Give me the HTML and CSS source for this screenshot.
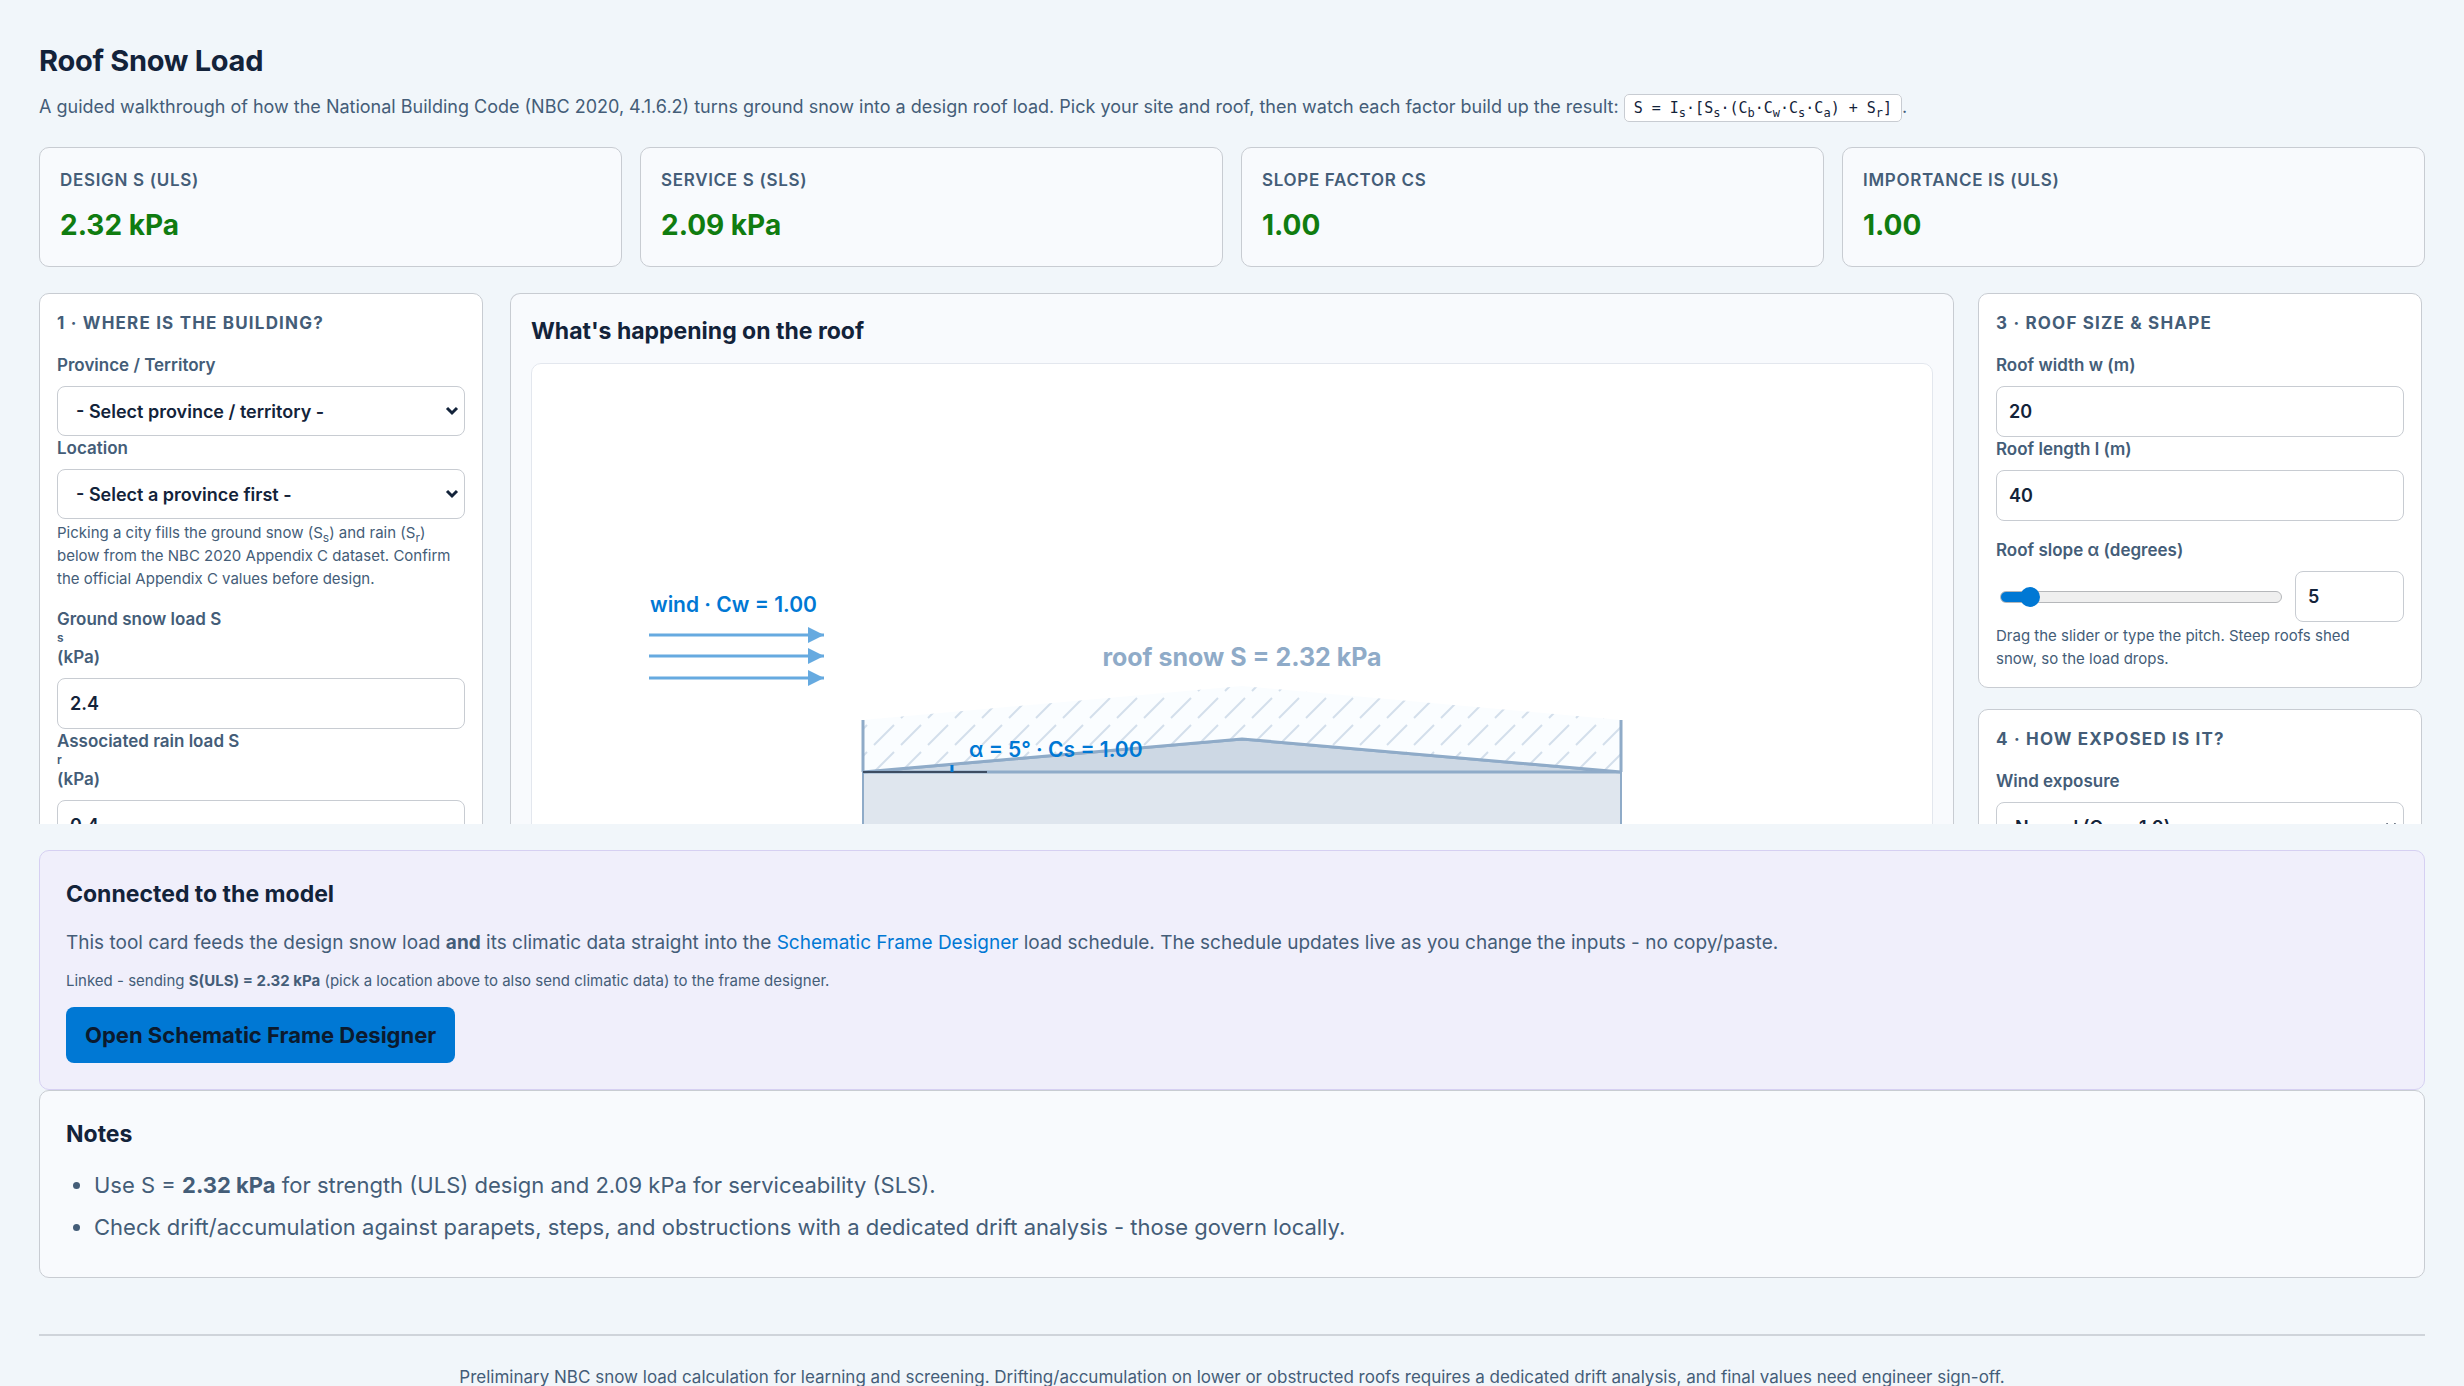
FILE: index.html
```html
<!DOCTYPE html>
<html lang="en">
<head>
    <meta charset="UTF-8">
    <title>Roof Snow Load</title>
    <link rel="stylesheet" href="styles.css">
</head>
<body>
    <div class="page">
        <header class="page-header">
            <h1>Roof Snow Load</h1>
            <p>A guided walkthrough of how the National Building Code (NBC 2020, 4.1.6.2) turns ground snow into a design roof load. Pick your site and roof, then watch each factor build up the result: <code>S = I<sub>s</sub>·[S<sub>s</sub>·(C<sub>b</sub>·C<sub>w</sub>·C<sub>s</sub>·C<sub>a</sub>) + S<sub>r</sub>]</code>.</p>
        </header>

        <section class="stats">
            <div class="stat">
                <span class="stat-label">Design S (ULS)</span>
                <span class="stat-value">2.32 kPa</span>
            </div>
            <div class="stat">
                <span class="stat-label">Service S (SLS)</span>
                <span class="stat-value">2.09 kPa</span>
            </div>
            <div class="stat">
                <span class="stat-label">Slope factor Cs</span>
                <span class="stat-value">1.00</span>
            </div>
            <div class="stat">
                <span class="stat-label">Importance Is (ULS)</span>
                <span class="stat-value">1.00</span>
            </div>
        </section>

        <main class="workspace">
            <div class="column">
                <section class="panel">
                    <h3>1 · Where is the building?</h3>
                    <div class="field">
                        <label for="province">Province / Territory</label>
                        <select id="province">
                            <option>- Select province / territory -</option>
                        </select>
                    </div>
                    <div class="field">
                        <label for="location">Location</label>
                        <select id="location">
                            <option>- Select a province first -</option>
                        </select>
                    </div>
                    <p class="hint">Picking a city fills the ground snow (S<sub>s</sub>) and rain (S<sub>r</sub>) below from the NBC 2020 Appendix C dataset. Confirm the official Appendix C values before design.</p>
                    <div class="field field-spaced">
                        <label for="groundSnow">Ground snow load S <sub>s</sub> (kPa)</label>
                        <input type="number" id="groundSnow" value="2.4" step="0.1">
                    </div>
                    <div class="field">
                        <label for="rainLoad">Associated rain load S <sub>r</sub> (kPa)</label>
                        <input type="number" id="rainLoad" value="0.4" step="0.1">
                    </div>
                </section>
            </div>

            <section class="stage">
                <h2>What's happening on the roof</h2>
                <div class="stage-canvas">
                    <svg class="diagram" viewBox="0 0 1400 640" role="img" aria-label="Roof section with snow and wind">
                        <defs>
                            <pattern id="snow" x="552" y="332" width="27" height="27" patternUnits="userSpaceOnUse">
                                <rect width="27" height="27" class="snow-fill"/>
                                <path d="M6 22L26 2" class="snow-hatch"/>
                            </pattern>
                            <marker id="arrow" viewBox="0 0 16 16" refX="16" refY="8" markerWidth="16" markerHeight="16" markerUnits="userSpaceOnUse">
                                <path d="M0 0L16 8L0 16Z" class="wind-head"/>
                            </marker>
                        </defs>

                        <!-- wind -->
                        <text x="118" y="248" class="label">wind · Cw = 1.00</text>
                        <g class="wind">
                            <path d="M117 271H292" marker-end="url(#arrow)"/>
                            <path d="M117 292H292" marker-end="url(#arrow)"/>
                            <path d="M117 314H292" marker-end="url(#arrow)"/>
                        </g>

                        <!-- building -->
                        <rect x="331" y="408" width="758" height="200" class="wall"/>
                        <path d="M331 408L710 375L1089 408Z" class="roof"/>

                        <!-- snow layer -->
                        <path d="M331 408V356L710 322L1089 356V408L710 375Z" fill="url(#snow)"/>
                        <path d="M331 408L710 375L1089 408" class="edge"/>
                        <path d="M331 356V408M1089 356V408" class="edge"/>
                        <text x="710" y="302" class="snow-label">roof snow S = 2.32 kPa</text>

                        <!-- slope -->
                        <path d="M331 408H455" class="slope-base"/>
                        <path d="M420 408V401" class="slope-arc"/>
                        <text x="437" y="393" class="label">α = 5° · Cs = 1.00</text>
                    </svg>
                </div>
            </section>

            <div class="column">
                <section class="panel">
                    <h3>3 · Roof size &amp; shape</h3>
                    <div class="field">
                        <label for="roofWidth">Roof width w (m)</label>
                        <input type="number" id="roofWidth" value="20">
                    </div>
                    <div class="field">
                        <label for="roofLength">Roof length l (m)</label>
                        <input type="number" id="roofLength" value="40">
                    </div>
                    <div class="field field-spaced">
                        <label for="slope">Roof slope α (degrees)</label>
                        <div class="slider-row">
                            <input type="range" id="slopeRange" min="0" max="70" value="5" aria-label="Roof slope slider" style="--fill: 10%">
                            <input type="number" id="slope" value="5">
                        </div>
                    </div>
                    <p class="hint">Drag the slider or type the pitch. Steep roofs shed snow, so the load drops.</p>
                </section>
                <section class="panel">
                    <h3>4 · How exposed is it?</h3>
                    <div class="field">
                        <label for="exposure">Wind exposure</label>
                        <select id="exposure">
                            <option>Normal (Cw = 1.0)</option>
                        </select>
                    </div>
                </section>
            </div>
        </main>

        <section class="card card-linked">
            <h2>Connected to the model</h2>
            <p>This tool card feeds the design snow load <strong>and</strong> its climatic data straight into the <a href="#frame-designer">Schematic Frame Designer</a> load schedule. The schedule updates live as you change the inputs - no copy/paste.</p>
            <p class="link-status">Linked - sending <strong>S(ULS) = 2.32 kPa</strong> (pick a location above to also send climatic data) to the frame designer.</p>
            <button type="button" class="btn">Open Schematic Frame Designer</button>
        </section>

        <section class="card">
            <h2>Notes</h2>
            <ul>
                <li>Use S = <strong>2.32 kPa</strong> for strength (ULS) design and 2.09 kPa for serviceability (SLS).</li>
                <li>Check drift/accumulation against parapets, steps, and obstructions with a dedicated drift analysis - those govern locally.</li>
            </ul>
        </section>

        <footer class="footer">
            <p>Preliminary NBC snow load calculation for learning and screening. Drifting/accumulation on lower or obstructed roofs requires a dedicated drift analysis, and final values need engineer sign-off.</p>
        </footer>
    </div>
</body>
</html>
```
FILE: styles.css
```css
:root {
    --bg: #f1f6fa;
    --surface: #f8fafd;
    --white: #ffffff;
    --border: #c8ccd2;
    --text: #13233a;
    --muted: #445d78;
    --accent: #0078d4;
    --good: #107c10;
    --steel: #8fabc8;
}
* {
    box-sizing: border-box;
}
body {
    margin: 0;
    font-family: Inter, "Liberation Sans", sans-serif;
    background-color: var(--bg);
    color: var(--text);
}
h1, h2, h3, p, ul {
    margin: 0;
}
.page {
    height: 100vh;
    overflow: hidden;
    padding: 40px 39px 0;
}

/* header */
h1 {
    font-size: 29px;
    line-height: 42px;
    letter-spacing: -0.01em;
}
.page-header p {
    margin-top: 10px;
    font-size: 18px;
    line-height: 30px;
    color: var(--muted);
}
code {
    padding: 4px 9px;
    border: 1px solid var(--border);
    border-radius: 5px;
    background-color: var(--white);
    color: var(--text);
    font-family: "DejaVu Sans Mono", monospace;
    font-size: 15px;
}
sub {
    font-size: 12px;
    line-height: 0;
}

/* results */
.stats {
    display: grid;
    grid-template-columns: repeat(4, 1fr);
    gap: 18px;
    margin-top: 24px;
}
.stat {
    display: flex;
    flex-direction: column;
    gap: 13px;
    height: 120px;
    padding: 20px;
    border: 1px solid var(--border);
    border-radius: 10px;
    background-color: var(--surface);
}
.stat-label {
    font-size: 17px;
    line-height: 24px;
    font-weight: 600;
    letter-spacing: 0.04em;
    text-transform: uppercase;
    color: var(--muted);
}
.stat-value {
    font-size: 28px;
    line-height: 40px;
    font-weight: 700;
    color: var(--good);
}

/* workspace */
.workspace {
    display: grid;
    grid-template-columns: 447px 1fr 447px;
    column-gap: 24px;
    height: calc(100vh - 855px);
    min-height: 400px;
    margin-top: 26px;
    overflow: hidden;
}
.column {
    display: flex;
    flex-direction: column;
    gap: 21px;
    padding-right: 3px;
}
.panel {
    flex: none;
    padding: 17px;
    border: 1px solid var(--border);
    border-radius: 10px;
    background-color: var(--white);
}
h3 {
    margin-bottom: 18px;
    font-size: 17px;
    line-height: 24px;
    font-weight: 700;
    letter-spacing: 0.07em;
    text-transform: uppercase;
    color: var(--muted);
}
.field label {
    display: flex;
    flex-direction: column;
    margin-bottom: 9px;
    font-size: 17px;
    line-height: 24px;
    font-weight: 600;
    color: var(--muted);
}
.field label sub {
    line-height: 14px;
}
.field-spaced {
    margin-top: 17px;
}
select,
input[type="number"] {
    display: block;
    width: 100%;
    height: 51px;
    padding: 0 12px;
    border: 1px solid var(--border);
    border-radius: 8px;
    background-color: var(--white);
    color: var(--text);
    font-family: inherit;
    font-size: 18px;
    font-weight: 600;
}
select {
    height: 50px;
    padding: 0 24px 0 18px;
    appearance: none;
    background-image: url("data:image/svg+xml,%3Csvg xmlns='http://www.w3.org/2000/svg' width='14' height='10' viewBox='0 0 14 10'%3E%3Cpath d='M2 2L7 7L12 2' fill='none' stroke='%2313233a' stroke-width='3'/%3E%3C/svg%3E");
    background-repeat: no-repeat;
    background-position: right 5px center;
}
.slider-row {
    display: grid;
    grid-template-columns: 1fr 109px;
    align-items: center;
    gap: 9px;
}
input[type="range"] {
    height: 22px;
    margin: 0 4px;
    appearance: none;
    background: none;
}
input[type="range"]::-webkit-slider-runnable-track {
    height: 12px;
    border: 1px solid #b5b7ba;
    border-radius: 6px;
    background: linear-gradient(to right, var(--accent) var(--fill), #efefef var(--fill));
}
input[type="range"]::-webkit-slider-thumb {
    appearance: none;
    width: 20px;
    height: 20px;
    margin-top: -5px;
    border-radius: 50%;
    background-color: var(--accent);
}
.hint {
    margin-top: 2px;
    padding-right: 12px;
    font-size: 15px;
    line-height: 23px;
    color: var(--muted);
}
.stage {
    padding: 20px;
    border: 1px solid var(--border);
    border-bottom: none;
    border-radius: 10px 10px 0 0;
    background-color: var(--surface);
    overflow: hidden;
}
h2 {
    font-size: 23px;
    line-height: 34px;
    font-weight: 700;
}
.stage-canvas {
    margin-top: 15px;
    border: 1px solid #e3e7ee;
    border-radius: 10px;
    background-color: var(--white);
}

/* diagram */
.diagram {
    display: block;
    width: 100%;
    font-family: inherit;
}
.label {
    fill: var(--accent);
    font-size: 21px;
    font-weight: 600;
}
.snow-label {
    fill: var(--steel);
    font-size: 25px;
    font-weight: 700;
    text-anchor: middle;
}
.wind path {
    stroke: #66aae0;
    stroke-width: 3;
}
.wind-head {
    fill: #66aae0;
}
.wall {
    fill: #dfe6ee;
    stroke: var(--steel);
    stroke-width: 2;
}
.roof {
    fill: #cdd8e4;
    stroke: var(--steel);
    stroke-width: 3;
}
.edge {
    fill: none;
    stroke: var(--steel);
    stroke-width: 3;
}
.snow-fill {
    fill: #fafdff;
}
.snow-hatch {
    stroke: #d3dfeb;
    stroke-width: 2;
}
.slope-base {
    stroke: #3d4d62;
    stroke-width: 2;
}
.slope-arc {
    stroke: var(--accent);
    stroke-width: 3;
}

/* cards */
.card {
    padding: 26px;
    border: 1px solid var(--border);
    border-radius: 10px;
    background-color: var(--surface);
}
.card p {
    font-size: 19px;
    line-height: 28px;
    color: var(--muted);
}
.card-linked {
    margin-top: 26px;
    border-color: #d6d0f2;
    background-color: #f0effb;
}
.card-linked h2 {
    margin-bottom: 18px;
}
.card .link-status {
    margin: 12px 0 14px;
    font-size: 15px;
    line-height: 24px;
}
a {
    color: var(--accent);
    text-decoration: none;
}
a:hover {
    text-decoration: underline;
}
.btn {
    display: block;
    height: 56px;
    padding: 0 19px;
    border: none;
    border-radius: 8px;
    background-color: var(--accent);
    color: #0b1a2e;
    font-family: inherit;
    font-size: 22px;
    font-weight: 700;
    cursor: pointer;
}
.card ul {
    margin: 13px 0 3px;
    padding-left: 28px;
    font-size: 22px;
    line-height: 42px;
    color: var(--muted);
}

.footer {
    margin-top: 56px;
    padding-top: 27px;
    border-top: 2px solid #cfd4da;
    font-size: 17px;
    line-height: 28px;
    text-align: center;
    color: var(--muted);
}
```
